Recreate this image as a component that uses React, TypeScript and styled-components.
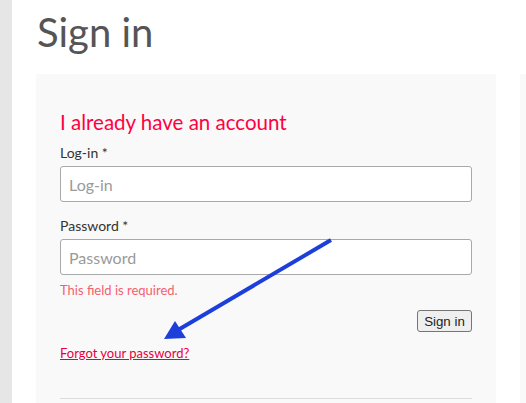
import React from "react";
import styled, { createGlobalStyle } from "styled-components";

const Global = createGlobalStyle`
  html, body { margin: 0; padding: 0; background: #fff; }
  body { font-family: Lato, "Noto Sans", sans-serif; overflow: hidden; }
`;

const Page = styled.div`
  position: relative;
  display: flex;
  width: 526px;
  height: 403px;
  overflow: hidden;
`;

const Sidebar = styled.div`
  width: 12px;
  flex: none;
  background: #e6e6e6;
`;

const Main = styled.main`
  flex: 1;
  padding-left: 24px;
  display: flex;
  flex-direction: column;
`;

const Title = styled.h1`
  margin: 0 0 0 1px;
  padding-top: 8px;
  font-family: Lato, sans-serif;
  font-weight: 400;
  font-size: 40px;
  line-height: 48px;
  color: #555;
  height: 66px;
`;

const Columns = styled.div`
  display: flex;
  gap: 24px;
  flex: 1;
`;

const Panel = styled.section`
  width: 460px;
  flex: none;
  background: #f9f9f9;
  padding: 33px 24px 0;
  box-sizing: border-box;
  display: flex;
  flex-direction: column;
`;

const SidePanel = styled.section`
  flex: 1;
  background: #f9f9f9;
`;

const PanelTitle = styled.h2`
  margin: 0 0 7px;
  font-weight: 400;
  font-size: 20.5px;
  line-height: 30px;
  color: #ff0040;
`;

const Label = styled.label`
  display: block;
  font-size: 14px;
  line-height: 18px;
  color: #333;
  margin-bottom: 4px;
`;

const Field = styled.div<{ $gap: number }>`
  display: flex;
  flex-direction: column;
  margin-bottom: ${(p) => p.$gap}px;
`;

const Input = styled.input`
  box-sizing: border-box;
  width: 412px;
  height: 36px;
  border: 1px solid #a9a9a9;
  border-radius: 3px;
  background: #fff;
  padding: 0 8px;
  font-family: Lato, sans-serif;
  font-size: 16px;
  color: #333;
  &::placeholder { color: #9a9a9a; }
`;

const ErrorText = styled.div`
  margin-top: 7px;
  font-size: 13px;
  line-height: 16px;
  color: #f4606e;
`;

const Actions = styled.div`
  display: flex;
  justify-content: flex-end;
  margin-top: 12px;
`;

const Button = styled.button`
  height: 22px;
  width: 55px;
  padding: 0;
  border: 1px solid #767676;
  border-radius: 3px;
  background: #efefef;
  font-family: "Liberation Sans", Arial, sans-serif;
  font-size: 13.3px;
  color: #222;
`;

const Link = styled.a`
  margin-top: 13px;
  align-self: flex-start;
  font-size: 13px;
  line-height: 16px;
  color: #e8003c;
  text-decoration: underline;
`;

const Divider = styled.hr`
  margin: 37px 0 0;
  border: 0;
  border-top: 1px solid #dddddd;
  width: 412px;
`;

const Arrow = styled.svg`
  position: absolute;
  left: 0;
  top: 0;
  pointer-events: none;
`;

export default function App() {
  return (
    <>
      <Global />
      <Page>
        <Sidebar />
        <Main>
          <Title>Sign in</Title>
          <Columns>
            <Panel>
              <PanelTitle>I already have an account</PanelTitle>
              <Field $gap={15}>
                <Label>Log-in *</Label>
                <Input placeholder="Log-in" />
              </Field>
              <Field $gap={0}>
                <Label>Password *</Label>
                <Input type="password" placeholder="Password" />
                <ErrorText>This field is required.</ErrorText>
              </Field>
              <Actions>
                <Button>Sign in</Button>
              </Actions>
              <Link href="#">Forgot your password?</Link>
              <Divider />
            </Panel>
            <SidePanel />
          </Columns>
        </Main>
        <Arrow width="526" height="403" viewBox="0 0 526 403">
          <line x1="331" y1="240" x2="178" y2="330" stroke="#1c3fdc" strokeWidth="4" />
          <polygon points="164,339 175,321 186,338" fill="#1c3fdc" />
        </Arrow>
      </Page>
    </>
  );
}
